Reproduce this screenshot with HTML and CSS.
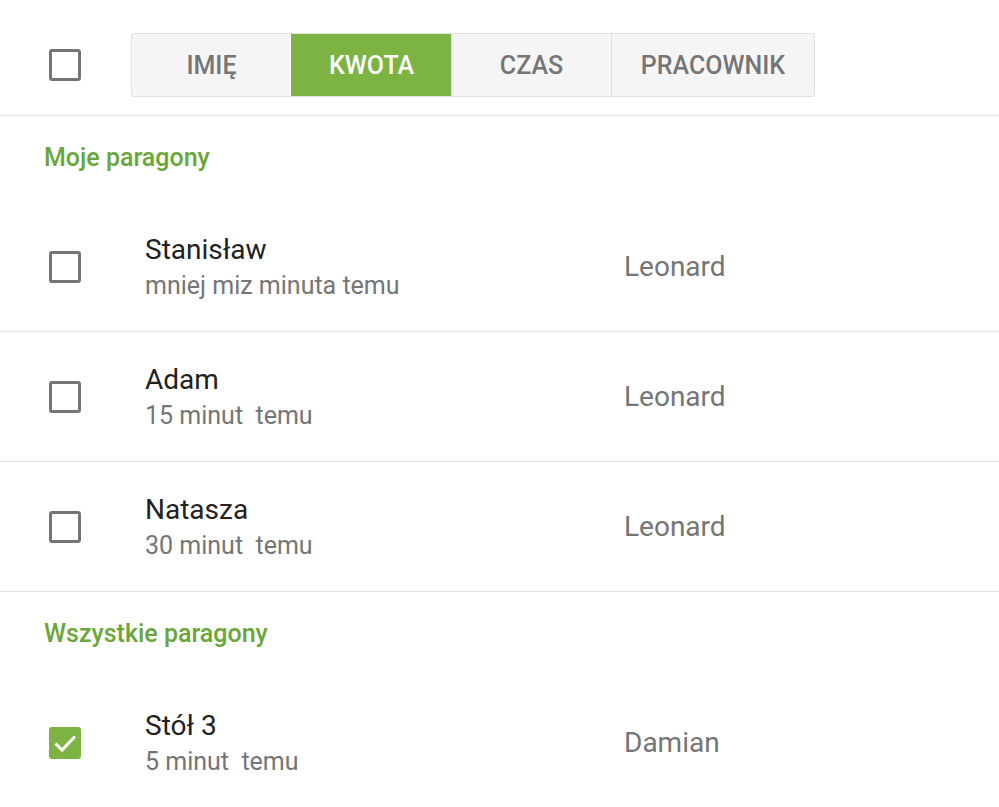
FILE: index.html
```html
<!DOCTYPE html>
<html lang="pl">
<head>
    <meta charset="UTF-8">
    <meta name="viewport" content="width=device-width, initial-scale=1.0">
    <title>Paragony</title>
    <link rel="stylesheet" href="styles.css">
</head>
<body>
    <div class="toolbar">
        <span class="check"></span>
        <div class="tabs">
            <button class="tab tab-name">Imię</button>
            <button class="tab tab-amount active">Kwota</button>
            <button class="tab tab-time">Czas</button>
            <button class="tab tab-worker">Pracownik</button>
        </div>
    </div>

    <div class="section-title">Moje paragony</div>

    <div class="row">
        <span class="check"></span>
        <div class="info">
            <div class="name">Stanisław</div>
            <div class="time">mniej miz minuta temu</div>
        </div>
        <div class="worker">Leonard</div>
    </div>

    <div class="row">
        <span class="check"></span>
        <div class="info">
            <div class="name">Adam</div>
            <div class="time">15 minut&nbsp; temu</div>
        </div>
        <div class="worker">Leonard</div>
    </div>

    <div class="row">
        <span class="check"></span>
        <div class="info">
            <div class="name">Natasza</div>
            <div class="time">30 minut&nbsp; temu</div>
        </div>
        <div class="worker">Leonard</div>
    </div>

    <div class="section-title">Wszystkie paragony</div>

    <div class="row">
        <span class="check checked">
            <svg viewBox="0 0 32 32" width="32" height="32">
                <path d="M6.5 16.5l6.5 6.5L26 9.5" fill="none" stroke="#fff" stroke-width="3"/>
            </svg>
        </span>
        <div class="info">
            <div class="name">Stół 3</div>
            <div class="time">5 minut&nbsp; temu</div>
        </div>
        <div class="worker">Damian</div>
    </div>
</body>
</html>
```

FILE: styles.css
```css
:root {
    --green: #7cb342;
    --green-text: #6aa63a;
    --line: #e0e0e0;
    --grey: #757575;
}

body {
    margin: 0;
    font-family: Roboto, 'Noto Sans', sans-serif;
    background: #fff;
    color: #212121;
    overflow: hidden;
}

.check {
    box-sizing: border-box;
    width: 32px;
    height: 32px;
    border: 3px solid var(--grey);
    border-radius: 3px;
    flex: none;
    display: flex;
    align-items: center;
    justify-content: center;
}

.check.checked {
    background: var(--green);
    border: none;
}

.toolbar {
    display: flex;
    align-items: center;
    padding: 33px 0 18px 49px;
    gap: 50px;
    border-bottom: 1px solid var(--line);
}

.tabs {
    display: flex;
    border: 1px solid var(--line);
    border-radius: 3px;
    background: #f5f5f5;
    overflow: hidden;
}

.tab {
    height: 62px;
    border: none;
    border-left: 1px solid var(--line);
    background: transparent;
    font-family: inherit;
    font-size: 25px;
    font-weight: 500;
    text-transform: uppercase;
    color: var(--grey);
    padding: 0;
}

.tab:first-child {
    border-left: none;
}

.tab-name { width: 159px; }
.tab-amount { width: 160px; }
.tab-time { width: 160px; }
.tab-worker { width: 203px; }

.tab.active {
    background: var(--green);
    color: #fff;
    border-left-color: var(--green);
}

.section-title {
    height: 86px;
    box-sizing: border-box;
    padding: 28px 0 0 44px;
    line-height: 28px;
    font-size: 25px;
    font-weight: 500;
    color: var(--green-text);
}

.row {
    display: flex;
    align-items: center;
    height: 129px;
    padding-left: 49px;
    border-bottom: 1px solid var(--line);
}

.row:last-child {
    border-bottom: none;
}

.info {
    width: 479px;
    margin-left: 64px;
}

.name {
    font-size: 28px;
    line-height: 37px;
}

.time {
    font-size: 25px;
    line-height: 35px;
    color: var(--grey);
}

.worker {
    font-size: 28px;
    color: var(--grey);
}
```
